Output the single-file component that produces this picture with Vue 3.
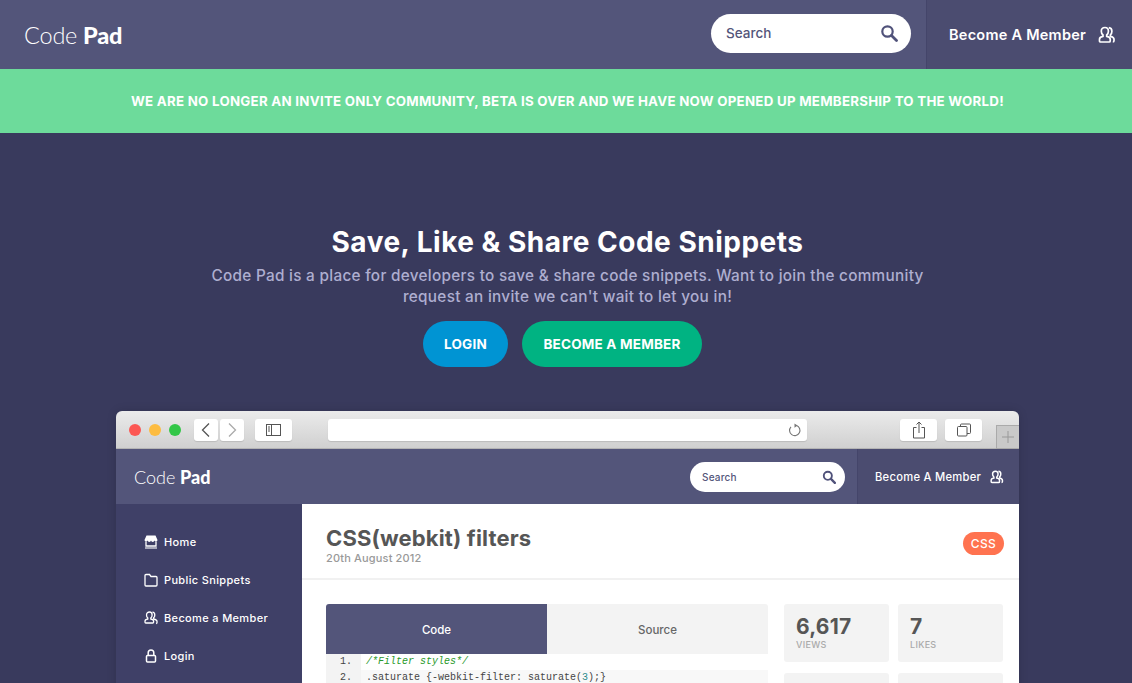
<script setup>
const nav = [
  { label: 'Home', icon: 'store' },
  { label: 'Public Snippets', icon: 'folder' },
  { label: 'Become a Member', icon: 'users' },
  { label: 'Login', icon: 'lock' },
]
</script>

<template>
  <div class="page">
    <header class="top">
      <div class="logo"><span class="thin">Code</span> <b>Pad</b></div>
      <div class="search">
        <span>Search</span>
        <svg viewBox="0 0 18 18" width="18" height="18"><circle cx="7.5" cy="7.5" r="5.2" fill="none" stroke="#50527a" stroke-width="2.2"/><path d="M11.5 11.5 16.5 16.5" stroke="#50527a" stroke-width="2.8" stroke-linecap="round"/></svg>
      </div>
      <div class="member">
        <span>Become A Member</span>
        <svg viewBox="0 0 18 18" width="18" height="18" fill="none" stroke="#fff" stroke-width="1.7"><path d="M7 1.500c2.200 0 3.400 1.500 3.400 3.700 0 1.600-.7 3-1.700 3.800v1.400c2 .4 3.500 1.300 3.500 2.800v1.800a1 1 0 0 1-1 1H2.500a1 1 0 0 1-1-1v-1.800c0-1.500 1.500-2.400 3.500-2.800V9c-1-.8-1.700-2.200-1.700-3.800C3.300 3 4.800 1.500 7 1.500Z"/><path d="M10.800 1.600c1.900.2 3.100 1.700 3.100 3.600 0 1.500-.6 2.900-1.500 3.700v1.500c2 .5 3.600 1.300 3.600 2.800v1.500c0 .6-.4 1.300-1.200 1.300"/></svg>
      </div>
    </header>

    <div class="banner">WE ARE NO LONGER AN INVITE ONLY COMMUNITY, BETA IS OVER AND WE HAVE NOW OPENED UP MEMBERSHIP TO THE WORLD!</div>

    <section class="hero">
      <h1>Save, Like &amp; Share Code Snippets</h1>
      <p>Code Pad is a place for developers to save &amp; share code snippets. Want to join the community<br>request an invite we can't wait to let you in!</p>
      <div class="cta">
        <a class="btn blue">LOGIN</a>
        <a class="btn green">BECOME A MEMBER</a>
      </div>
    </section>

    <div class="window">
      <div class="chrome">
        <div class="lights"><i class="r"></i><i class="y"></i><i class="g"></i></div>
        <div class="navbtns">
          <span class="cbtn nb"><svg viewBox="0 0 24 22" width="24" height="22" fill="none" stroke="#555" stroke-width="1.3"><path d="M15 4.500 8.500 11 15 17.500"/></svg></span>
          <span class="cbtn nb"><svg viewBox="0 0 24 22" width="24" height="22" fill="none" stroke="#aaa" stroke-width="1.3"><path d="M9 4.500 15.500 11 9 17.500"/></svg></span>
        </div>
        <span class="cbtn wide side"><svg viewBox="0 0 16 14" width="16" height="14" fill="none" stroke="#555"><rect x=".5" y="1.500" width="14" height="11"/><path d="M5.500 1.500v11M2 4h2M2 6h2M2 8h2"/></svg></span>
        <div class="url"><svg viewBox="0 0 14 14" width="14" height="14" fill="none" stroke="#777" stroke-width="1.100"><path d="M8.500 2.500A5.200 5.200 0 1 1 3 3.800"/><path d="M6.500 .5 9.500 2.500 6.500 4.800" fill="#777" stroke="none"/></svg></div>
        <span class="cbtn wide share"><svg viewBox="0 0 14 18" width="14" height="18" fill="none" stroke="#555"><path d="M4.500 6.500H1.500v10.500h11V6.500H9.500M7 12V1M4.500 3.500 7 1l2.500 2.500"/></svg></span>
        <span class="cbtn wide tabs"><svg viewBox="0 0 14 14" width="14" height="14" fill="none" stroke="#555"><rect x=".5" y="3.500" width="9.500" height="9.500" rx="1"/><path d="M3.500 3.500V2a1 1 0 0 1 1-1h8a1 1 0 0 1 1 1v7.500a1 1 0 0 1-1 1H10"/></svg></span>
        <span class="plus"><svg viewBox="0 0 12 12" width="12" height="12" stroke="#999"><path d="M6 0v12M0 6h12"/></svg></span>
      </div>

      <div class="intop">
        <div class="inlogo"><span class="thin">Code</span> <b>Pad</b></div>
        <div class="insearch">
          <span>Search</span>
          <svg viewBox="0 0 18 18" width="14" height="14"><circle cx="7.5" cy="7.5" r="5.2" fill="none" stroke="#50527a" stroke-width="2.4"/><path d="M11.500 11.500 16.500 16.500" stroke="#50527a" stroke-width="3" stroke-linecap="round"/></svg>
        </div>
        <div class="inmember">
          <span>Become A Member</span>
          <svg viewBox="0 0 18 18" width="14" height="14" fill="none" stroke="#fff" stroke-width="1.900"><path d="M7 1.500c2.200 0 3.400 1.500 3.400 3.700 0 1.600-.7 3-1.700 3.800v1.400c2 .4 3.500 1.300 3.500 2.800v1.800a1 1 0 0 1-1 1H2.500a1 1 0 0 1-1-1v-1.800c0-1.500 1.500-2.400 3.500-2.800V9c-1-.8-1.700-2.200-1.700-3.800C3.300 3 4.800 1.500 7 1.500Z"/><path d="M10.800 1.600c1.900.2 3.100 1.700 3.100 3.600 0 1.500-.6 2.900-1.500 3.700v1.500c2 .5 3.600 1.300 3.600 2.800v1.500c0 .6-.4 1.300-1.200 1.300"/></svg>
        </div>
      </div>

      <div class="body">
        <aside class="side-nav">
          <div v-for="n in nav" :key="n.label" class="nav-item">
            <svg viewBox="0 0 14 14" width="14" height="14" fill="none" stroke="#fff" stroke-width="1.3">
              <template v-if="n.icon === 'store'">
                <path d="M2.500 .5h9l2 4.500a1.600 1.600 0 0 1-3 .6 1.800 1.800 0 0 1-3.500 0 1.800 1.800 0 0 1-3.500 0 1.600 1.600 0 0 1-3-.6Z" fill="#fff" stroke="none"/><path d="M2 6.500v4.500h10V6.500"/><path d="M1 13h12" stroke-width="1.100"/>
              </template>
              <path v-else-if="n.icon === 'folder'" d="M1 2.500a1 1 0 0 1 1-1h3.500l1.500 2h5a1 1 0 0 1 1 1v7.500a1 1 0 0 1-1 1H2a1 1 0 0 1-1-1Z"/>
              <template v-else-if="n.icon === 'users'">
                <path d="M5.500 1c1.700 0 2.600 1.200 2.600 2.900 0 1.300-.5 2.400-1.300 3v1.100c1.600.3 2.800 1 2.800 2.200v1a.8.8 0 0 1-.8.8H1.800a.8.800 0 0 1-.8-.8v-1c0-1.200 1.200-1.900 2.800-2.200V6.900C3 6.300 2.500 5.200 2.500 3.900 2.500 2.200 3.800 1 5.500 1Z"/><path d="M8.400 1.100c1.500.1 2.400 1.300 2.400 2.800 0 1.200-.5 2.300-1.200 2.900V8c1.600.4 3.400 1 3.400 2.200v1.300c0 .5-.3 1-.9 1"/>
              </template>
              <template v-else>
                <rect x="2.500" y="6.500" width="9" height="6.500" rx="1" stroke-width="1.500"/><path d="M4.200 6.500V3.800a2.800 2.800 0 0 1 5.600 0v2.700" stroke-width="1.500"/>
              </template>
            </svg>
            <span>{{ n.label }}</span>
          </div>
        </aside>

        <main class="content">
          <div class="head">
            <div>
              <h2>CSS(webkit) filters</h2>
              <div class="date">20th August 2012</div>
            </div>
            <span class="tag">CSS</span>
          </div>
          <div class="panel">
            <div class="codebox">
              <div class="tabrow"><div class="tab on">Code</div><div class="tab">Source</div></div>
              <div class="line odd"><span class="num">1.</span><code class="cm">/*Filter styles*/</code></div>
              <div class="line"><span class="num">2.</span><code>.saturate {-webkit-filter: saturate(<em>3</em>);}</code></div>
            </div>
            <div class="stats">
              <div class="stat"><strong>6,617</strong><small>VIEWS</small></div>
              <div class="stat"><strong>7</strong><small>LIKES</small></div>
              <div class="stat"></div>
              <div class="stat"></div>
            </div>
          </div>
        </main>
      </div>
    </div>
  </div>
</template>

<style>
html, body { margin: 0; background: #393a5d; }
</style>

<style scoped>
.page { width: 1132px; height: 683px; overflow: hidden; background: #393a5d; font-family: Inter, "Open Sans", sans-serif; color: #fff; }
.top { height: 69px; display: flex; align-items: center; background: #53557a; }
.logo { margin-left: 24px; font-family: Lato, sans-serif; font-size: 23.500px; flex: 1; letter-spacing: -.2px; }
.thin { font-weight: 300; }
.logo b { font-weight: 900; }
.search { width: 200px; height: 39px; margin-right: 15px; margin-top: -3px; box-sizing: border-box; padding: 0 13px 0 15px; background: #fff; border-radius: 20px; display: flex; align-items: center; justify-content: space-between; color: #53557a; font-size: 13.500px; font-weight: 500; }
.member { width: 206px; height: 69px; box-sizing: border-box; padding: 0 16px 0 22px; background: #4b4c70; border-left: 1px solid #44456a; display: flex; align-items: center; justify-content: space-between; font-size: 14.500px; font-weight: 600; letter-spacing: .25px; }
.banner { height: 64px; box-sizing: border-box; padding-left: 3px; background: #6ddb9b; display: flex; align-items: center; justify-content: center; font-size: 13.300px; font-weight: 700; letter-spacing: .26px; }
.hero { text-align: center; padding-top: 92px; height: 186px; padding-left: 3px; }
h1 { margin: 0; font-size: 28px; line-height: 34px; font-weight: 700; letter-spacing: .5px; }
.hero p { margin: 6px 0 0; font-size: 15.300px; line-height: 21px; color: #aeaed0; font-weight: 500; letter-spacing: .3px; }
.cta { margin: 14px 10px 0 0; display: flex; justify-content: center; gap: 14px; }
.btn { height: 46px; border-radius: 23px; display: flex; align-items: center; justify-content: center; font-size: 13.500px; font-weight: 700; letter-spacing: .2px; }
.blue { width: 85px; background: #0094d3; }
.green { width: 180px; background: #00b382; }
.window { margin: 0 113px 0 116px; border-radius: 6px 6px 0 0; overflow: hidden; box-shadow: 0 0 10px rgba(0,0,0,.15); }
.chrome { height: 37px; background: linear-gradient(#ebebeb, #d0d0d0); border-bottom: 1px solid #b4b4b4; display: flex; align-items: center; position: relative; }
.lights { display: flex; gap: 8px; margin-left: 13px; }
.lights i { width: 12px; height: 12px; border-radius: 50%; display: block; }
.r { background: #fc5753; } .y { background: #fdbc40; } .g { background: #33c748; }
.cbtn { height: 22px; background: #fff; border-radius: 3px; display: flex; align-items: center; justify-content: center; box-shadow: 0 1px 1px rgba(0,0,0,.12); }
.navbtns { display: flex; gap: 2px; margin-left: 13px; }
.nb { width: 24px; }
.wide { width: 37px; }
.side { margin-left: 11px; }
.url { width: 479px; height: 22px; margin-left: 36px; background: #fff; border-radius: 3px; display: flex; align-items: center; justify-content: flex-end; padding-right: 5px; box-sizing: border-box; box-shadow: 0 1px 1px rgba(0,0,0,.12); }
.share { margin-left: 93px; }
.tabs { margin-left: 8px; }
.plus { position: absolute; right: 0; bottom: -1px; width: 23px; height: 24px; box-sizing: border-box; background: #c9c9c9; border: 1px solid #aaa; border-right: 0; display: flex; align-items: center; justify-content: center; }
.intop { height: 55px; display: flex; align-items: center; background: #53557a; }
.inlogo { margin-left: 18px; font-family: Lato, sans-serif; font-size: 18px; flex: 1; }
.inlogo b { font-weight: 900; }
.insearch { width: 155px; height: 30px; margin-right: 12px; box-sizing: border-box; padding: 0 9px 0 12px; background: #fff; border-radius: 15px; display: flex; align-items: center; justify-content: space-between; color: #53557a; font-size: 10px; font-weight: 500; letter-spacing: .2px; }
.inmember { width: 162px; height: 55px; box-sizing: border-box; padding: 0 15px 0 17px; background: #4b4c70; border-left: 1px solid #44456a; display: flex; align-items: center; justify-content: space-between; font-size: 11.200px; font-weight: 500; letter-spacing: .27px; }
.body { display: flex; height: 300px; }
.side-nav { width: 186px; background: #3f4067; box-sizing: border-box; padding: 19px 0 0 28px; }
.nav-item { height: 38px; display: flex; align-items: center; gap: 6px; font-size: 11px; font-weight: 500; letter-spacing: .35px; }
.content { flex: 1; background: #fff; color: #555; }
.head { height: 76px; box-sizing: border-box; border-bottom: 2px solid #f1f1f1; padding: 21px 15px 0 24px; display: flex; justify-content: space-between; align-items: flex-start; }
h2 { margin: 0; font-size: 22px; line-height: 26px; font-weight: 700; color: #565656; letter-spacing: .15px; }
.date { font-size: 11px; color: #999; line-height: 14px; font-weight: 500; letter-spacing: .15px; }
.tag { margin-top: 7px; width: 41px; height: 23px; background: #ff7350; color: #fff; border-radius: 12px; display: flex; align-items: center; justify-content: center; font-size: 12px; font-weight: 500; letter-spacing: .4px; }
.panel { display: flex; padding: 24px 15px 0 24px; gap: 16px; }
.codebox { width: 442px; }
.tabrow { display: flex; height: 50px; }
.tab { flex: 1; background: #f3f3f3; display: flex; align-items: center; justify-content: center; padding-top: 2px; box-sizing: border-box; font-size: 11.500px; font-weight: 500; color: #666; border-radius: 0 3px 0 0; }
.tab.on { background: #53557a; color: #fff; border-radius: 3px 0 0 0; }
.line { height: 16px; display: flex; background: #f8f8f8; font: 10px/16px "Liberation Mono", monospace; color: #444; }
.num { width: 35px; box-sizing: border-box; text-align: right; padding-right: 9px; background: #f3f3f3; }
.line code { padding-left: 5px; font: inherit; }
.odd { background: #fff; }
.cm { color: #2a9a2a; font-style: italic !important; }
em { font-style: normal; color: #2a8a8a; }
.stats { width: 220px; display: grid; grid-template-columns: 105px 105px; gap: 11px 9px; grid-auto-rows: 58px; }
.stat { background: #f3f3f3; border-radius: 3px; padding: 11px 12px 0; box-sizing: border-box; }
.stat strong { display: block; font-size: 21px; line-height: 24px; font-weight: 700; color: #565656; letter-spacing: .2px; }
.stat small { display: block; font-size: 9px; line-height: 12px; color: #aaa; font-weight: 500; letter-spacing: .3px; }
</style>
